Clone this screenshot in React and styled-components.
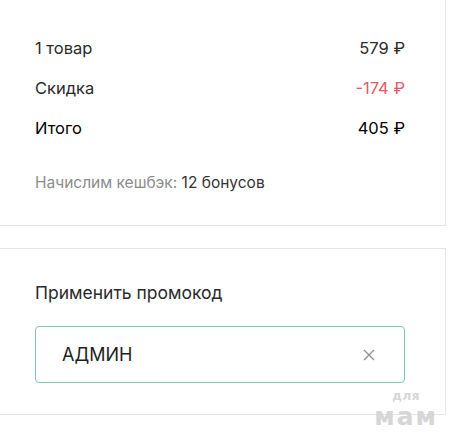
import React from 'react';
import styled, { createGlobalStyle } from 'styled-components';

const GlobalStyle = createGlobalStyle`
  html, body {
    margin: 0;
    padding: 0;
    background: #ffffff;
  }
  body {
    font-family: Inter, "Noto Sans", Arial, sans-serif;
    color: #222222;
    overflow: hidden;
  }
`;

const StyledPage = styled.div`
  position: relative;
  width: 453px;
  height: 439px;
  display: flex;
  flex-direction: column;
  gap: 22px;
`;

const StyledCard = styled.section`
  width: 446px;
  box-sizing: border-box;
  background: #ffffff;
  border: 1px solid #e4e4e4;
  border-left: none;
  border-top: ${({ $open }) => ($open ? 'none' : '1px solid #e4e4e4')};
  padding: ${({ $pad }) => $pad};
`;

const StyledRow = styled.div`
  display: flex;
  justify-content: space-between;
  align-items: center;
  height: 40px;
  font-size: 16.5px;
  font-weight: 400;
  color: ${({ $strong }) => ($strong ? '#000000' : '#2a2a2a')};
`;

const StyledValue = styled.span`
  color: ${({ $tone }) => ($tone === 'sale' ? '#e35a66' : 'inherit')};
`;

const StyledCashback = styled.div`
  margin-top: 25px;
  font-size: 15.5px;
  line-height: 20px;
  color: #8c8c8c;

  b {
    font-weight: 400;
    color: #333333;
  }
`;

const StyledLabel = styled.div`
  font-size: 17.5px;
  line-height: 24px;
  color: #2a2a2a;
`;

const StyledInputBox = styled.div`
  margin-top: 21px;
  height: 57px;
  box-sizing: border-box;
  display: flex;
  align-items: center;
  justify-content: space-between;
  padding: 0 29px 0 26px;
  border: 1px solid #7cc7b4;
  border-radius: 4px;
  font-size: 18px;
  color: #1e1e1e;
`;

const StyledClear = styled.button`
  display: inline-flex;
  padding: 0;
  border: 0;
  background: transparent;
  cursor: pointer;
  color: #8f8f8f;
`;

const StyledMark = styled.div`
  position: absolute;
  right: 15px;
  bottom: 12px;
  display: flex;
  flex-direction: column;
  align-items: center;
  gap: 5px;
  font-family: "DejaVu Sans", sans-serif;
  font-weight: 700;
  color: #d6d6d6;

  span:first-child {
    font-size: 12px;
    line-height: 12px;
    letter-spacing: 0.5px;
  }

  span:last-child {
    font-size: 25px;
    line-height: 20px;
    letter-spacing: 2px;
  }
`;

const rows = [
  { label: '1 товар', value: '579 ₽' },
  { label: 'Скидка', value: '-174 ₽', tone: 'sale' },
  { label: 'Итого', value: '405 ₽', strong: true },
];

const App = () => (
  <>
    <GlobalStyle />
    <StyledPage>
      <StyledCard $open $pad="28px 40px 32px 35px">
        {rows.map((row) => (
          <StyledRow key={row.label} $strong={row.strong}>
            <span>{row.label}</span>
            <StyledValue $tone={row.tone}>{row.value}</StyledValue>
          </StyledRow>
        ))}
        <StyledCashback>
          Начислим кешбэк: <b>12 бонусов</b>
        </StyledCashback>
      </StyledCard>
      <StyledCard $pad="32px 40px 31px 35px">
        <StyledLabel>Применить промокод</StyledLabel>
        <StyledInputBox>
          АДМИН
          <StyledClear type="button" aria-label="Очистить">
            <svg width="12" height="12" viewBox="0 0 12 12">
              <path d="M1 1L11 11M11 1L1 11" stroke="currentColor" strokeWidth="1.3" />
            </svg>
          </StyledClear>
        </StyledInputBox>
      </StyledCard>
      <StyledMark>
        <span>для</span>
        <span>мам</span>
      </StyledMark>
    </StyledPage>
  </>
);

export default App;
